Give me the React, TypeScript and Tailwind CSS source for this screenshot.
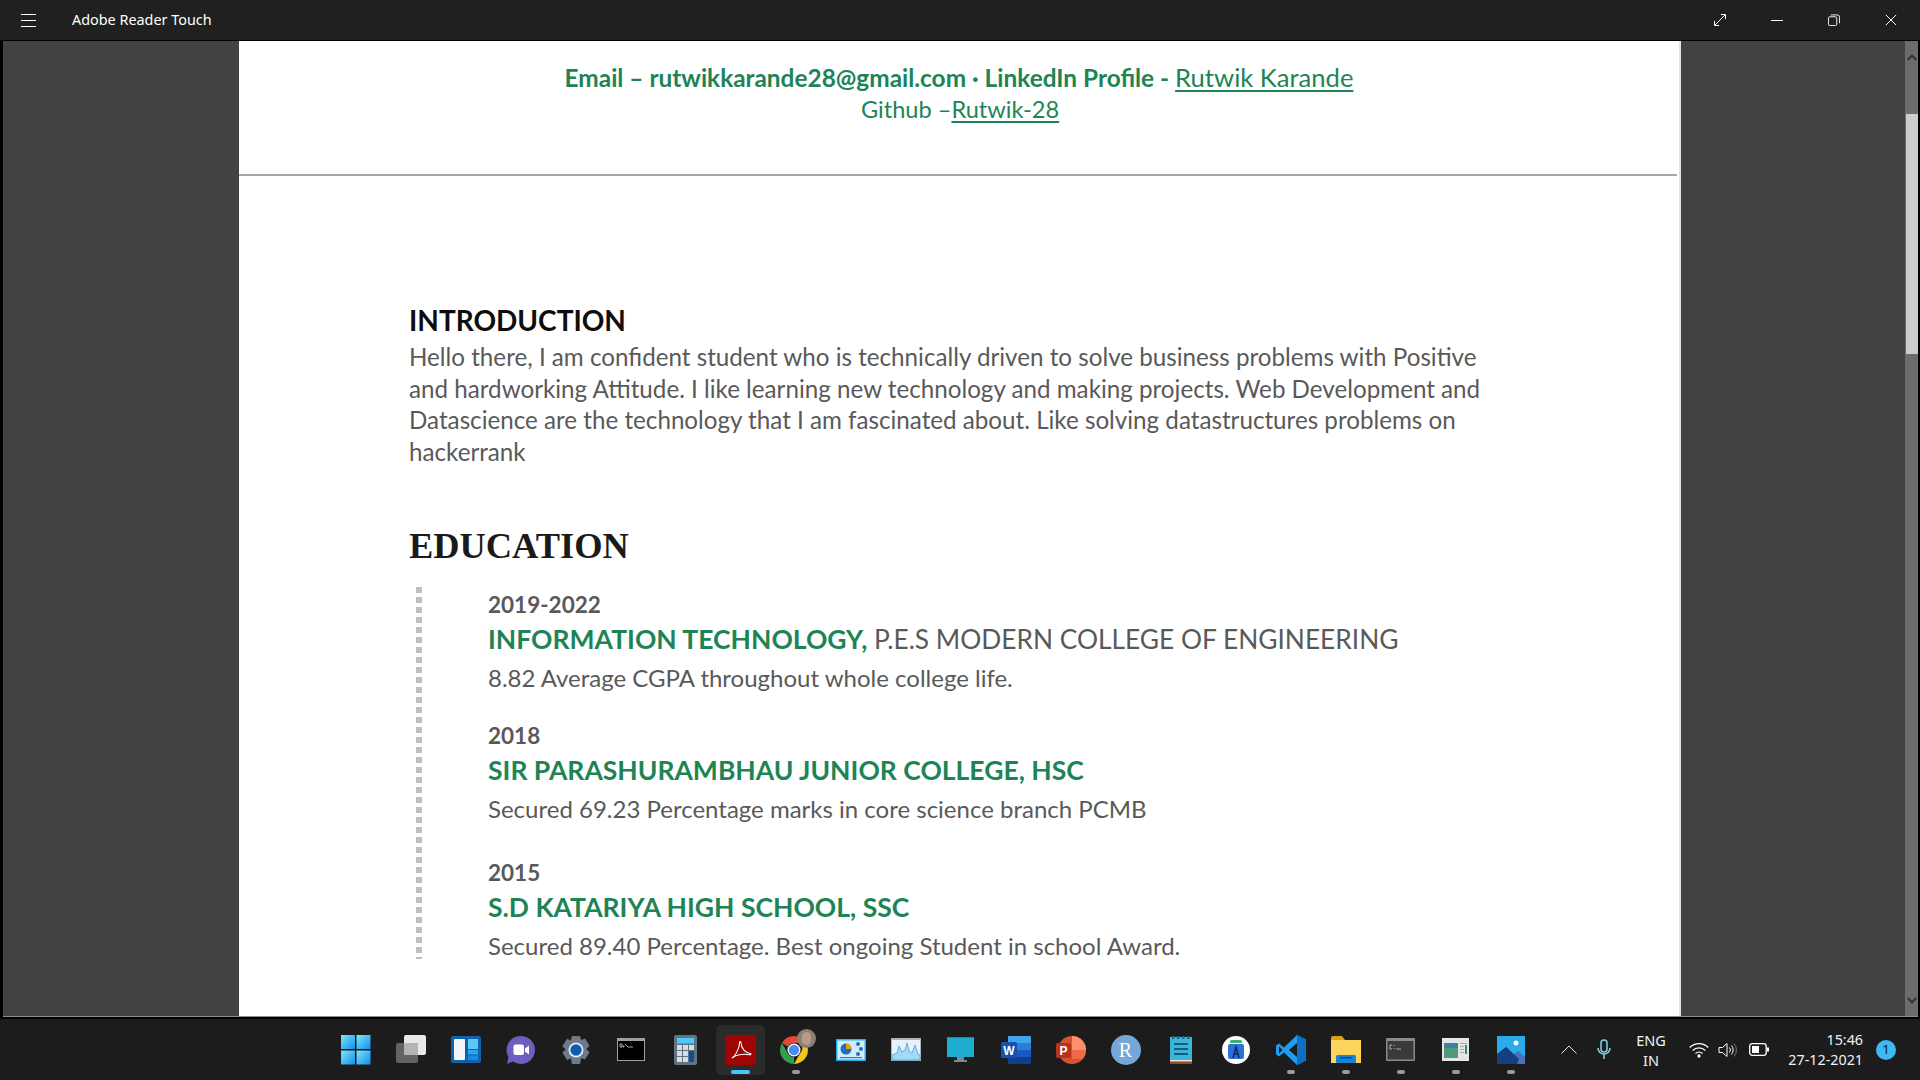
import { ReactNode } from 'react';

const doc = "font-['Lato','Noto_Sans',sans-serif]";

function Underline({ children }: { children: ReactNode }) {
    return <span className="underline decoration-[2px] underline-offset-[3px]">{children}</span>;
}

function EduItem({ year, title, extra, note, gap }: { year: string, title: string, extra?: string, note: string, gap: string }) {
    return (
        <div className={gap}>
            <div className="text-[22.5px] leading-[30px] font-bold text-[#595959]">{year}</div>
            <div className="text-[26.500px] leading-[38px] whitespace-nowrap">
                <span className="font-bold text-[#1e8455]">{title}</span>
                {extra && <span className="text-[26.300px] text-[#595959]"> {extra}</span>}
            </div>
            <div className="text-[24px] leading-[32px] mt-[4px] text-[#595959]">{note}</div>
        </div>
    );
}

function Win() {
    return (
        <svg width="30" height="30" viewBox="0 0 30 30">
            <defs>
                <linearGradient id="w" x1="0" y1="0" x2="1" y2="1">
                    <stop offset="0" stopColor="#7fe6fb" />
                    <stop offset="1" stopColor="#0f8fef" />
                </linearGradient>
            </defs>
            <rect x="0" y="0" width="14" height="14" fill="url(#w)" />
            <rect x="15.5" y="0" width="14" height="14" fill="url(#w)" />
            <rect x="0" y="15.5" width="14" height="14" fill="url(#w)" />
            <rect x="15.5" y="15.5" width="14" height="14" fill="url(#w)" />
        </svg>
    );
}

const icons: { el: ReactNode, dot?: string, active?: boolean }[] = [
    { el: <Win /> },
    {
        el: (
            <svg width="32" height="30" viewBox="0 0 32 30">
                <rect x="9" y="0" width="22" height="20" rx="2" fill="#e8e8e8" />
                <rect x="1" y="8" width="22" height="20" rx="2" fill="#6c6c6c" fillOpacity="0.9" />
                <rect x="9" y="8" width="14" height="12" fill="#b4b4b4" />
            </svg>
        ),
    },
    {
        el: (
            <svg width="30" height="28" viewBox="0 0 30 28">
                <rect width="30" height="27" rx="2" fill="#0f62ac" />
                <rect x="3" y="3" width="11" height="21" rx="1" fill="#f2f6fa" />
                <rect x="17" y="3" width="10" height="10" fill="#5fc7f5" />
                <rect x="17" y="14" width="10" height="4.5" fill="#2ba6ee" />
                <rect x="17" y="19.5" width="10" height="4.5" fill="#128ce6" />
            </svg>
        ),
    },
    {
        el: (
            <svg width="30" height="30" viewBox="0 0 30 30">
                <path d="M15 1a14 14 0 1 1-8 25.5L1 29l1.5-7A14 14 0 0 1 15 1z" fill="#6b5fc0" />
                <rect x="7.5" y="9.5" width="10.5" height="10.5" rx="2" fill="#fff" />
                <path d="M19 13.5l4-3v9l-4-3z" fill="#fff" />
            </svg>
        ),
    },
    {
        el: (
            <svg width="30" height="30" viewBox="0 0 30 30">
                <path d="M11 1h8l1.2 4 3.8-1.6 4.6 7.4-3.2 3.2 3.2 3.2-4.6 7.4-3.8-1.6L19 29h-8l-1.2-5.6L6 25l-4.6-7.4L4.6 14.400 1.400 11.200 6 3.800l3.800 1.600z" fill="#6c7a89" />
                <circle cx="15" cy="15" r="7.500" fill="#e6ecf2" />
                <circle cx="15" cy="15" r="5.700" fill="#0f5db0" />
            </svg>
        ),
    },
    {
        el: (
            <svg width="28" height="24" viewBox="0 0 28 24">
                <rect width="28" height="23" fill="#a0a0a0" />
                <rect x="1" y="3" width="26" height="19" fill="#000" />
                <path d="M3 6h2v3H3zM6 8h1v1H6zM8 6l3 3M11 9h5" stroke="#cfcfcf" strokeWidth="0.8" fill="none" />
            </svg>
        ),
    },
    {
        el: (
            <svg width="24" height="30" viewBox="0 0 24 30">
                <rect width="23" height="30" rx="2" fill="#5f7485" />
                <rect x="3" y="3" width="17" height="5.500" fill="#4fc8f5" />
                <rect x="3" y="10" width="5" height="5" fill="#d8dde2" />
                <rect x="9" y="10" width="5" height="5" fill="#d8dde2" />
                <rect x="15" y="10" width="5" height="5" fill="#d8dde2" />
                <rect x="3" y="16" width="5" height="5" fill="#d8dde2" />
                <rect x="9" y="16" width="5" height="5" fill="#d8dde2" />
                <rect x="3" y="22" width="5" height="5" fill="#d8dde2" />
                <rect x="9" y="22" width="5" height="5" fill="#d8dde2" />
                <rect x="15" y="16" width="5" height="11" fill="#124d8e" />
            </svg>
        ),
    },
    {
        el: (
            <svg width="30" height="30" viewBox="0 0 30 30">
                <rect width="30" height="30" fill="#a00505" />
                <path d="M6.500 22.500c3-1.500 7-10 7-14.500 0-2 1.500-2 1.500 0 0 5 5 10.500 9 10.500 1.500 0 1 1.500-.5 1.200-4-.7-11-.2-14.500 1.300-1.500 1-3 2.500-2.500 1.500z" fill="none" stroke="#fff" strokeWidth="1.100" />
            </svg>
        ),
        active: true,
    },
    {
        el: (
            <div className="relative w-[30px] h-[30px]">
                <svg width="28" height="28" viewBox="0 0 28 28" className="absolute -left-[1px] top-[1px]">
                    <path d="M14 0a14 14 0 0 1 12.100 7H14a7 7 0 0 0-6.100 3.500L1.900 7A14 14 0 0 1 14 0z" fill="#e0483a" />
                    <path d="M26.100 7A14 14 0 0 1 14 28l6-10.500A7 7 0 0 0 20 7z" fill="#f5c518" />
                    <path d="M1.900 7l6 10.500A7 7 0 0 0 14 21l-0 7A14 14 0 0 1 1.900 7z" fill="#2fa04e" />
                    <circle cx="14" cy="14" r="6.500" fill="#fff" />
                    <circle cx="14" cy="14" r="5.200" fill="#4a8bf0" />
                </svg>
                <div className="absolute left-[16px] -top-[6px] w-[19px] h-[19px] rounded-full bg-[#8b8078]" />
                <div className="absolute left-[21px] -top-[3px] w-[9px] h-[13px] rounded-full bg-[#b89a86]" />
            </div>
        ),
        dot: 'bg-[#9a9a9a]',
    },
    {
        el: (
            <svg width="30" height="22" viewBox="0 0 30 22">
                <rect width="30" height="22" fill="#2baef0" />
                <rect x="1.500" y="1.500" width="27" height="19" fill="#cfeefc" />
                <circle cx="10" cy="10" r="5.500" fill="#1f6fc0" />
                <path d="M10 10V4.500a5.500 5.500 0 0 1 5.500 5.500z" fill="#f09a1a" />
                <circle cx="22" cy="5" r="2" fill="#1f6fc0" />
                <circle cx="25" cy="10" r="2" fill="#1f6fc0" />
                <circle cx="22" cy="15" r="2" fill="#1f6fc0" />
                <rect x="4" y="18" width="22" height="1.200" fill="#1c8ad8" />
            </svg>
        ),
    },
    {
        el: (
            <svg width="30" height="24" viewBox="0 0 30 24">
                <rect width="30" height="23" fill="#a9b4bc" />
                <rect x="1" y="2" width="28" height="20" fill="#e8f2f8" />
                <path d="M1 17l5-2 2-7 3 6 3-2 2-7 2 8 3 2 3-8 3 9 2 1v5H1z" fill="#a5d8f5" stroke="#2e9de0" strokeWidth="0.7" />
            </svg>
        ),
    },
    {
        el: (
            <svg width="28" height="26" viewBox="0 0 28 26">
                <rect width="27" height="20" fill="#1daecf" />
                <rect y="0" width="27" height="1" fill="#4a7b8a" />
                <rect x="10" y="20" width="7" height="4" fill="#7a8a94" />
                <rect x="7" y="23" width="13" height="2" fill="#7a8a94" />
            </svg>
        ),
    },
    {
        el: (
            <svg width="30" height="28" viewBox="0 0 30 28">
                <rect x="7" y="0" width="23" height="7" rx="1" fill="#41a5ee" />
                <rect x="7" y="7" width="23" height="7" fill="#2b7cd3" />
                <rect x="7" y="14" width="23" height="7" fill="#185abd" />
                <rect x="7" y="21" width="23" height="7" rx="1" fill="#103f91" />
                <rect x="0" y="6" width="16" height="16" rx="1.500" fill="#1551b0" />
                <text x="8" y="18.500" textAnchor="middle" fontSize="12" fontWeight="700" fontFamily="Liberation Sans, sans-serif" fill="#fff">W</text>
            </svg>
        ),
    },
    {
        el: (
            <svg width="30" height="28" viewBox="0 0 30 28">
                <circle cx="16" cy="14" r="14" fill="#d35230" />
                <path d="M16 0a14 14 0 0 1 14 14H16z" fill="#ff8f6b" />
                <path d="M16 14h14a14 14 0 0 1-3 8.700H16z" fill="#ed6c47" />
                <rect x="0" y="7" width="15" height="15" rx="1.500" fill="#b7321a" />
                <text x="7.500" y="19" textAnchor="middle" fontSize="12" fontWeight="700" fontFamily="Liberation Sans, sans-serif" fill="#fff">P</text>
            </svg>
        ),
    },
    {
        el: (
            <div className="w-[30px] h-[30px] rounded-full bg-[#75a7d8] flex items-center justify-center text-white text-[20px] leading-none font-['Liberation_Serif',serif]">R</div>
        ),
    },
    {
        el: (
            <svg width="22" height="28" viewBox="0 0 22 28">
                <rect y="1" width="22" height="26" fill="#3db4d8" />
                <rect y="25" width="22" height="3" fill="#8a4f23" />
                <rect y="24" width="22" height="1.500" fill="#e9e2d2" />
                <rect x="2" y="0" width="2.500" height="3" fill="#0f6f90" />
                <rect x="7" y="0" width="2.500" height="3" fill="#0f6f90" />
                <rect x="12" y="0" width="2.500" height="3" fill="#0f6f90" />
                <rect x="17" y="0" width="2.500" height="3" fill="#0f6f90" />
                <rect x="4" y="7" width="14" height="2" fill="#0f5f80" />
                <rect x="4" y="12" width="14" height="2" fill="#0f5f80" />
                <rect x="4" y="17" width="14" height="2" fill="#0f5f80" />
            </svg>
        ),
    },
    {
        el: (
            <div className="w-[28px] h-[28px] rounded-full bg-white flex items-center justify-center">
                <svg width="18" height="20" viewBox="0 0 18 20">
                    <path d="M3 3a6 6 0 0 1 12 0z" fill="#3fae6a" />
                    <rect x="1" y="4" width="16" height="15" rx="2" fill="#2f6fdc" />
                    <path d="M6 18l3-11 3 11M7.500 14h3" stroke="#0d2a5c" strokeWidth="1.500" fill="none" />
                </svg>
            </div>
        ),
    },
    {
        el: (
            <svg width="30" height="30" viewBox="0 0 30 30">
                <path d="M21 0l9 4.500v21L21 30 8 17.500l-5 4-3-2v-9l3-2 5 4z" fill="#1f9cf0" />
                <path d="M21 0l9 4.500v21L21 30z" fill="#0f6fc0" />
                <path d="M21 8l-8 7 8 7z" fill="#1c1c1c" />
                <path d="M3 11.500L6.500 15 3 18.500z" fill="#1c1c1c" />
            </svg>
        ),
        dot: 'bg-[#9a9a9a]',
    },
    {
        el: (
            <svg width="30" height="27" viewBox="0 0 30 27">
                <path d="M0 2a2 2 0 0 1 2-2h9l3 4H0z" fill="#d9a010" />
                <rect y="4" width="30" height="23" fill="#fcd55c" />
                <rect x="5" y="19" width="20" height="8" rx="1.500" fill="#1583d8" />
                <rect x="9" y="21" width="12" height="1.500" fill="#0a4f8f" />
            </svg>
        ),
        dot: 'bg-[#9a9a9a]',
    },
    {
        el: (
            <svg width="30" height="24" viewBox="0 0 30 24">
                <rect width="29" height="23" rx="1" fill="#8a8a8a" />
                <rect x="1.500" y="3" width="26" height="18.500" fill="#3a3a3a" />
                <path d="M6 7H4v4h2M8 7v1M8 10v1M10 11h5" stroke="#c8c8c8" strokeWidth="0.800" fill="none" />
            </svg>
        ),
        dot: 'bg-[#9a9a9a]',
    },
    {
        el: (
            <svg width="28" height="24" viewBox="0 0 28 24">
                <rect width="27" height="23" fill="#e4e6e6" />
                <rect x="2" y="5" width="14" height="15" fill="#4f9a78" />
                <rect x="2" y="5" width="14" height="5" fill="#3f7fa0" />
                <rect x="18" y="5" width="7" height="1" fill="#9ab" />
                <rect x="23" y="7" width="2" height="9" fill="#2f8f70" />
                <rect x="18" y="8" width="4" height="1" fill="#aaa" />
                <rect x="18" y="11" width="4" height="1" fill="#aaa" />
                <rect x="18" y="14" width="4" height="1" fill="#aaa" />
            </svg>
        ),
        dot: 'bg-[#9a9a9a]',
    },
    {
        el: (
            <svg width="28" height="28" viewBox="0 0 28 28">
                <rect width="28" height="28" fill="#2cabec" />
                <path d="M0 18l9-7 8 7 4-3 7 6v7H0z" fill="#4a6fc0" />
                <path d="M0 18l9-7 13 12 -2 5H0z" fill="#14407f" />
                <circle cx="19" cy="7" r="2.500" fill="#fff" />
            </svg>
        ),
        dot: 'bg-[#9a9a9a]',
    },
];

export default function App() {
    return (
        <div className="w-[1920px] h-[1080px] flex flex-col overflow-hidden bg-black font-['Noto_Sans','Open_Sans',sans-serif]">
            {/* title bar */}
            <div className="h-10 flex items-center bg-[#202020] text-white shrink-0">
                <div className="flex flex-col gap-[5px] ml-[21px] w-[15px]">
                    <div className="h-px bg-white" />
                    <div className="h-px bg-white" />
                    <div className="h-px bg-white" />
                </div>
                <span className="ml-[36px] text-[14.4px]">Adobe Reader Touch</span>
                <div className="ml-auto flex items-center h-full">
                    <svg width="12" height="12" viewBox="0 0 14 14" fill="none" stroke="#fff" strokeWidth="1.150" className="mr-[45px]">
                        <path d="M1 13L13 1M8 .6h5.400V6M.6 8v5.400H6" />
                    </svg>
                    <div className="w-3 h-px bg-white mr-[45px]" />
                    <svg width="12" height="12" viewBox="0 0 13 13" fill="none" stroke="#fff" className="mr-[45px]">
                        <rect x=".5" y="3" width="9" height="9.500" rx="1.500" />
                        <path d="M3 1h7a2.500 2.500 0 0 1 2.500 2.500V10" />
                    </svg>
                    <svg width="12" height="12" viewBox="0 0 14 14" fill="none" stroke="#fff" strokeWidth="1.150" className="mr-[23px]">
                        <path d="M1 1l12 12M13 1L1 13" />
                    </svg>
                </div>
            </div>

            {/* viewer */}
            <div className="mt-px h-[976px] flex shrink-0 pl-[3px] pr-[2px] overflow-hidden">
                <div className="flex-1 flex bg-[#424242] border-b border-[#8a8a8a]">
                    <div className="ml-[236px] w-[1442px] bg-white overflow-hidden border-r-2 border-[#e4e4e4]">
                        <div className={doc}>
                            <div className="pt-[18px] text-center text-[#1e8455]">
                                <div className="text-[24.4px] leading-[36px] whitespace-nowrap">
                                    <span className="font-bold">Email – rutwikkarande28@gmail.com · LinkedIn Profile - </span>
                                    <span className="text-[25.6px]"><Underline>Rutwik Karande</Underline></span>
                                </div>
                                <div className="text-[23.6px] leading-[27px] ml-[2px]">
                                    Github –<Underline>Rutwik-28</Underline>
                                </div>
                            </div>
                            <div className="mt-[51px] h-[2px] bg-[#a6a6a6] mr-[2px]" />

                            <div className="pl-[170px]">
                                <h1 className="mt-[124px] text-[28px] leading-[41px] font-bold text-[#0d0d0d]">INTRODUCTION</h1>
                                <p className="text-[24.2px] leading-[31.500px] text-[#595959] whitespace-nowrap">
                                    Hello there, I am confident student who is technically driven to solve business problems with Positive<br />
                                    and hardworking Attitude. I like learning new technology and making projects. Web Development and<br />
                                    Datascience are the technology that I am fascinated about. Like solving datastructures problems on<br />
                                    hackerrank
                                </p>
                                <h2 className="mt-[58px] text-[36.4px] leading-[42px] font-bold text-[#1a1a1a] font-['Liberation_Serif',serif]">EDUCATION</h2>

                                <div className="mt-[20px] flex">
                                    <div className="ml-[7px] w-[6px] h-[372px] bg-[repeating-linear-gradient(to_bottom,#bfbfbf_0,#bfbfbf_6px,transparent_6px,transparent_10px)]" />
                                    <div className="ml-[66px] pt-[3px]">
                                        <EduItem
                                            gap=""
                                            year="2019-2022"
                                            title="INFORMATION TECHNOLOGY,"
                                            extra="P.E.S MODERN COLLEGE OF ENGINEERING"
                                            note="8.82 Average CGPA throughout whole college life."
                                        />
                                        <EduItem
                                            gap="mt-[27px]"
                                            year="2018"
                                            title="SIR PARASHURAMBHAU JUNIOR COLLEGE, HSC"
                                            note="Secured 69.23 Percentage marks in core science branch PCMB"
                                        />
                                        <EduItem
                                            gap="mt-[33px]"
                                            year="2015"
                                            title="S.D KATARIYA HIGH SCHOOL, SSC"
                                            note="Secured 89.40 Percentage. Best ongoing Student in school Award."
                                        />
                                    </div>
                                </div>
                            </div>
                        </div>
                    </div>

                    {/* scrollbar */}
                    <div className="ml-auto w-[13px] bg-[#6c6c6c] flex flex-col items-center">
                        <svg width="10" height="7" viewBox="0 0 10 7" fill="none" stroke="#333" strokeWidth="2" className="mt-[13px] shrink-0">
                            <path d="M.7 6L5 1.500 9.300 6" />
                        </svg>
                        <div className="mt-[53px] w-[12px] h-[240px] bg-[#cdcdcd] shrink-0" />
                        <svg width="10" height="7" viewBox="0 0 10 7" fill="none" stroke="#333" strokeWidth="2" className="mt-auto mb-[12px] shrink-0">
                            <path d="M.7 1L5 5.500 9.300 1" />
                        </svg>
                    </div>
                </div>
            </div>

            {/* taskbar */}
            <div className="mt-[2px] flex-1 flex items-center bg-[#1c1c1c] text-white">
                <div className="ml-[328px] flex">
                    {icons.map((it, i) => (
                        <div key={i} className="relative w-[55px] h-[50px] flex items-center justify-center">
                            {it.active && <div className="absolute left-[3px] w-[49px] h-[50px] rounded-[5px] bg-[#2b2b2b]" />}
                            <div className="relative">{it.el}</div>
                            {it.active && <div className="absolute bottom-[1px] left-[18px] w-[19px] h-[4px] rounded-full bg-[#4cc2ff]" />}
                            {it.dot && <div className={`absolute bottom-[1px] left-[24px] w-[8px] h-[4px] rounded-full ${it.dot}`} />}
                        </div>
                    ))}
                </div>

                <svg width="16" height="9" viewBox="0 0 16 9" fill="none" stroke="#e6e6e6" className="ml-[23px]">
                    <path d="M.5 8.500L8 1l7.500 7.500" />
                </svg>
                <svg width="14" height="21" viewBox="0 0 14 21" fill="none" stroke="#7fd4ea" strokeWidth="1.500" className="ml-[20px]">
                    <rect x="4" y="1" width="6" height="12" rx="3" />
                    <path d="M1 9a6 6 0 0 0 12 0M7 15v5" />
                </svg>
                <div className="ml-[22px] w-[36px] text-center text-[14.5px] leading-[20px] text-[#f2f2f2]">ENG<br />IN</div>
                <svg width="20" height="16" viewBox="0 0 20 16" fill="none" stroke="#fff" strokeWidth="1.300" className="ml-[20px]">
                    <path d="M.8 5.500a13 13 0 0 1 18.400 0M3.700 8.500a9 9 0 0 1 12.600 0M6.500 11.500a5 5 0 0 1 7 0" />
                    <circle cx="10" cy="14" r="1" fill="#fff" />
                </svg>
                <svg width="20" height="16" viewBox="0 0 20 16" fill="none" stroke="#fff" className="ml-[9px]">
                    <path d="M1 5.500h3.500L9 1.500v13l-4.500-4H1z" />
                    <path d="M11.500 5.500a4 4 0 0 1 0 5M13.500 3.500a7 7 0 0 1 0 9" />
                    <path d="M16 1.500a10 10 0 0 1 0 13" stroke="#777" />
                </svg>
                <svg width="20" height="13" viewBox="0 0 20 13" className="ml-[11px]">
                    <rect x=".7" y=".7" width="16.500" height="11.600" rx="2.500" fill="none" stroke="#fff" strokeWidth="1.300" />
                    <rect x="3" y="3" width="7" height="7" fill="#fff" />
                    <rect x="18" y="4.500" width="2" height="4" fill="#fff" />
                </svg>
                <div className="ml-[19px] w-[75px] text-right text-[14.3px] leading-[20px] text-[#f2f2f2] whitespace-nowrap">
                    15:46<br />27-12-2021
                </div>
                <div className="ml-[13px] w-[20px] h-[20px] rounded-full bg-[#3db8f5] flex items-center justify-center text-[13px] text-[#10202a]">1</div>
            </div>
        </div>
    );
}
